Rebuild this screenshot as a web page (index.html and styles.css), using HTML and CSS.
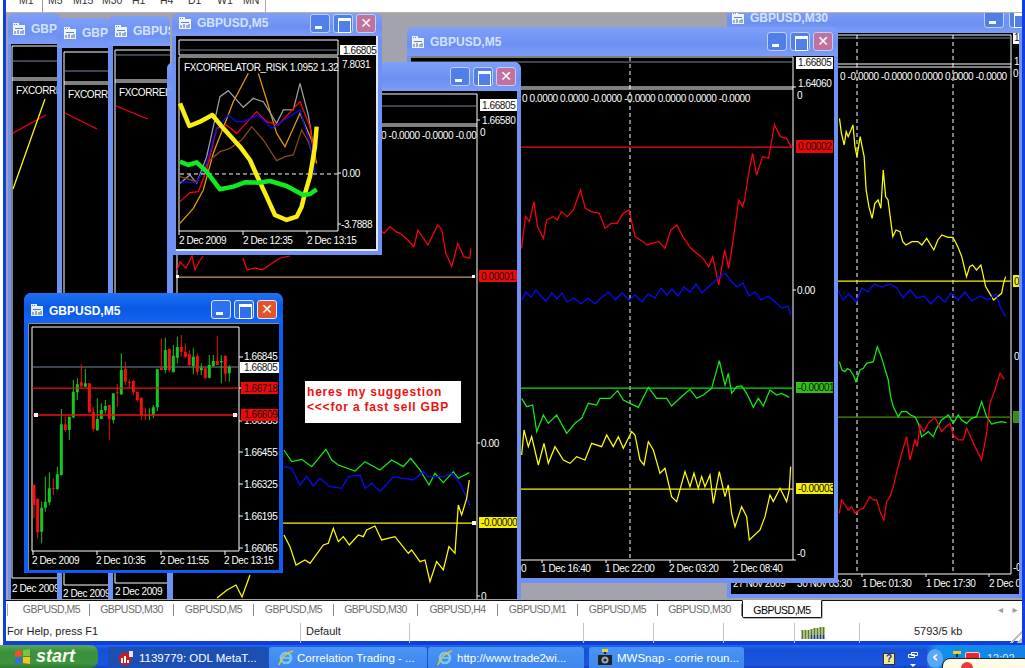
FILE: index.html
```html
<!DOCTYPE html>
<html lang="en">
<head>
  <meta charset="UTF-8">
  <title>MetaTrader - GBPUSD</title>
  <link rel="stylesheet" href="styles.css">
</head>
<body>
<svg class="defs" width="0" height="0">
  <symbol id="winicon" viewBox="0 0 14 14">
    <path fill="#fff" d="M1 1h6v2h6v10H1z"/>
    <path fill="#5a7fd0" d="M2 2h1v1H2zM4 2h1v1H4zM3 6h8v1H3z"/>
    <path fill="none" stroke="#44608f" d="M3 9v3M6 8v4M9 9v3M11 8v4"/>
  </symbol>
</svg>

<div class="app">
  <div class="frame">
    <div class="toolbar">
      <span>M1</span><i></i><span>M5</span><span>M15</span><span>M30</span><span>H1</span><span>H4</span><span>D1</span><span>W1</span><span>MN</span>
    </div>

    <div class="mdi">
      <!-- back windows -->
      <div class="win w1">
        <div class="title"><svg class="ico"><use href="#winicon"/></svg><span>GBPUSD,M5</span></div>
        <svg class="chart" viewBox="11 44 49 555">
          <path class="wline" d="M12 46H60M12 78H60M12 80H60M12 46V578M12 578H60"/>
          <path class="gline" d="M12 61H60"/>
          <text x="16" y="94">FXCORRELATOR_RISK</text>
          <path class="red" d="M13 133L46 115"/>
          <path class="yellow" d="M13 189L45 99"/>
          <text x="12" y="592">2 Dec 2009</text>
        </svg>
      </div>

      <div class="win w2">
        <div class="title"><svg class="ico"><use href="#winicon"/></svg><span>GBPUSD,M5</span></div>
        <svg class="chart" viewBox="62 48 48 551">
          <path class="wline" d="M64 52H110M64 82H110M64 84H110M64 52V585M64 585H110"/>
          <path class="gline" d="M64 71H110"/>
          <text x="68" y="98">FXCORRELATOR_RISK</text>
          <path class="red" d="M65 113L97 129"/>
          <text x="63" y="597">2 Dec 2009</text>
        </svg>
      </div>

      <div class="win w3">
        <div class="title"><svg class="ico"><use href="#winicon"/></svg><span>GBPUSD,M5</span></div>
        <svg class="chart" viewBox="113 46 57 553">
          <path class="wline" d="M115 50H170M115 80H170M115 82H170M115 50V583M115 583H170"/>
          <path class="gline" d="M115 55H170"/>
          <text x="119" y="96">FXCORRELATOR_RISK</text>
          <path class="red" d="M116 106L148 119"/>
          <text x="115" y="595">2 Dec 2009</text>
        </svg>
      </div>

      <div class="win w7">
        <div class="title"><svg class="ico"><use href="#winicon"/></svg><span>GBPUSD,M30</span><div class="btns"><b class="bmin"></b><b class="bmax"></b></div></div>
        <svg class="chart" viewBox="731 33 288 561">
          <path class="wline" d="M731 35H1011M731 64H1011M731 67H1011M1011 35V574M731 574H1011"/>
          <path class="gline" d="M731 38H1011"/>
          <path class="dash" d="M857 35V574M953 35V574"/>
          <text x="840" y="80">0 -0.0000 -0.0000 0.0000 0.0000 -0.0000</text>
          <path class="yline" d="M731 281H1011"/>
          <path class="oline" d="M731 417H1011"/>
          <g class="zoom2">
            <polyline class="yellow" points="1103,355 1108,400 1115,435 1120,395 1125,410 1137,375 1142,440 1147,470 1155,410 1160,440 1165,470 1170,570 1177,620 1185,655 1192,610 1200,600 1207,625 1213,510 1219,590 1225,600 1237,710 1245,690 1255,695 1262,725 1270,735 1285,725 1300,725 1310,735 1322,715 1340,750 1350,720 1360,705 1375,712 1388,712 1400,740 1410,770 1422,830 1430,800 1437,795 1447,810 1458,795 1470,860 1490,900 1510,880 1515,850 1520,830"/>
          </g>
          <polyline class="blue" points="838,290 843,300 849,294 856,302 862,288 868,292 874,284 882,287 890,284 897,288 903,298 910,290 917,298 924,296 931,304 938,296 945,302 951,293 958,300 965,292 972,301 980,296 988,300 996,294 1000,306 1003,312 1006,317"/>
          <g class="zoom7">
            <polyline class="green" points="958,185 966,210 975,215 982,206 990,210 1000,225 1008,245 1020,210 1030,205 1040,190 1060,185 1072,140 1082,165 1090,190 1105,240 1112,290 1120,320 1135,350 1145,335 1160,335 1172,345 1185,350 1195,370 1205,410 1225,395 1240,410 1250,385 1265,360 1285,345 1300,370 1315,345 1325,360 1340,370 1355,355 1370,350 1385,305 1400,350 1415,372 1430,368 1445,365 1460,368"/>
            <polyline class="red" points="958,640 965,600 975,615 985,630 995,620 1005,640 1018,630 1030,625 1050,590 1060,600 1070,600 1082,640 1092,660 1100,605 1110,590 1120,560 1132,510 1145,460 1160,410 1170,480 1185,420 1192,440 1200,375 1212,395 1225,370 1245,352 1265,395 1278,380 1290,370 1300,405 1315,420 1330,420 1340,385 1352,410 1365,440 1385,480 1400,400 1410,310 1425,270 1440,220 1453,238"/>
          </g>
          <rect class="lwhite" x="1013" y="32" width="6" height="12"/>
          <text class="dark" x="1014" y="41">1</text>
          <text x="1014" y="65">1</text>
          <text x="1013" y="77">0</text>
          <rect class="lyellow" x="1013" y="275" width="6" height="12"/>
          <text class="dark" x="1014" y="285">0</text>
          <rect class="lolive" x="1013" y="411" width="6" height="12"/>
          <text x="1014" y="360">0</text>
          <text x="1013" y="571">-0</text>
          <path class="wline" d="M862 574v3M926 574v3M989 574v3"/>
          <text x="733" y="587">27 Nov 2009</text>
          <text x="797" y="587">30 Nov 03:30</text>
          <text x="862" y="587">1 Dec 01:30</text>
          <text x="926" y="587">1 Dec 17:30</text>
          <text x="989" y="587">2 Dec 09:30</text>
        </svg>
      </div>

      <div class="win w6">
        <div class="title"><svg class="ico"><use href="#winicon"/></svg><span>GBPUSD,M5</span><div class="btns"><b class="bmin"></b><b class="bmax"></b><b class="bclose">✕</b></div></div>
        <svg class="chart" viewBox="411 56 423 522">
          <path class="wline" d="M411 57H793M411 87H793M411 89H793M793 57V560M521 560H793"/>
          <path class="gline" d="M411 62H793"/>
          <path class="dash" d="M630 57V560"/>
          <text x="522" y="102">0 0.0000 0.0000 -0.0000 -0.0000 0.0000 0.0000 -0.0000</text>
          <path class="rline" d="M521 147H793"/>
          <path class="gnline" d="M521 388H793"/>
          <path class="yline" d="M521 489H793"/>
          <g class="zoom2">
            <polyline class="red" points="305,745 315,650 325,665 336,605 345,680 360,715 368,660 385,650 395,660 405,635 420,650 435,630 453,570 465,625 480,635 500,640 515,685 530,670 545,670 560,640 575,630 590,710 610,725 620,735 630,730 650,725 665,745 680,690 695,675 710,710 730,745 750,765 760,775 775,800 785,770 800,855 815,750 825,805 835,730 850,600 860,620 865,600 875,520 885,460 895,525 910,470 925,475 940,375 955,410 970,415 982,440"/>
          </g>
          <polyline class="blue" points="522,300 526,292 531,297 536,290 541,296 546,301 552,293 557,299 562,293 567,302 574,298 581,304 588,298 595,304 602,297 609,292 615,300 622,293 629,300 635,295 642,302 648,294 655,298 661,288 667,295 672,289 678,296 684,287 690,292 696,284 702,293 707,288 714,282 719,277 725,273 731,281 737,287 743,283 749,296 755,292 761,300 768,296 775,302 782,308 788,306 791,315"/>
          <g class="zoom7">
            <polyline class="green" points="5,295 20,320 38,315 50,395 70,345 85,370 110,345 140,400 165,370 185,355 205,310 230,315 240,295 270,295 293,272 310,300 330,310 355,322 385,262 410,295 440,295 455,318 490,285 510,268 530,295 550,285 575,265 598,182 615,255 625,220 635,280 650,260 665,258 680,280 700,322 715,295 730,318 750,270 770,285 785,280 808,292"/>
            <polyline class="yellow" points="5,465 12,390 25,440 35,410 55,495 72,430 85,490 105,440 130,480 150,490 170,470 195,480 215,430 245,440 260,405 280,440 295,410 310,445 335,395 345,405 360,480 372,495 385,425 400,450 420,520 435,505 455,590 470,605 495,515 510,560 522,520 535,565 545,530 555,560 570,525 580,610 598,515 615,590 625,555 635,640 645,680 665,620 680,650 688,720 720,690 735,650 750,585 760,605 780,565 800,605 808,570 812,500"/>
          </g>
          <path class="wline" d="M793 87h3M793 290h3M793 560h3M542 560v3M606 560v3M670 560v3M734 560v3"/>
          <rect class="lwhite" x="796" y="57" width="37" height="12"/>
          <text class="dark" x="798" y="66">1.66805</text>
          <text x="798" y="87">1.64060</text>
          <text x="797" y="99">0</text>
          <rect class="lred" x="796" y="140" width="37" height="13"/>
          <text class="dark" x="798" y="150">0.00002</text>
          <text x="797" y="294">0.00</text>
          <rect class="lgreen" x="796" y="382" width="37" height="11"/>
          <text class="dark" x="798" y="391">-0.00001</text>
          <rect class="lyellow" x="796" y="483" width="37" height="11"/>
          <text class="dark" x="798" y="492">-0.00003</text>
          <text x="797" y="557">-0</text>
          <text x="521" y="572">0</text>
          <text x="541" y="572">1 Dec 16:40</text>
          <text x="605" y="572">1 Dec 22:00</text>
          <text x="669" y="572">2 Dec 03:20</text>
          <text x="733" y="572">2 Dec 08:40</text>
        </svg>
      </div>

      <div class="win w5">
        <div class="title"><svg class="ico"><use href="#winicon"/></svg><span>GBPUSD,M5</span><div class="btns"><b class="bmin"></b><b class="bmax"></b><b class="bclose">✕</b></div></div>
        <svg class="chart" viewBox="173 91 344 508">
          <path class="wline" d="M173 94H477M173 124H477M173 126H477M477 94V599M177 255V294"/>
          <path class="gline" d="M173 106H477"/>
          <text x="381" y="139">0 -0.0000 -0.0000 -0.00</text>
          <path class="tline" d="M177 277H473"/>
          <rect class="handle" x="176" y="275" width="3" height="3"/>
          <rect class="handle" x="472" y="275" width="3" height="3"/>
          <path class="yline" d="M283 523H473"/>
          <rect class="handle yh" x="472" y="521" width="4" height="4"/>
          <polyline class="red" points="177,270 180,262 186,268 192,256 195,270 199,262 203,256"/>
          <polyline class="red" points="243,258 247,270 255,268 262,270 271,264 280,258 290,256"/>
          <g class="zoom2">
            <polyline class="red" points="-50,690 -40,700 -25,680 -10,695 0,700 15,715 35,740 45,690 70,735 95,675 105,690 115,760 130,800 145,730 160,770 175,775 178,745"/>
          </g>
          <g class="zoom6">
            <polyline class="green" points="12,570 35,605 65,598 95,620 138,568 155,600 175,615 225,633 255,605 300,630 335,600 370,620 392,595 420,630 447,675 465,640 490,668 520,635 535,655 568,638"/>
            <polyline class="blue" points="12,620 35,625 60,675 80,650 100,678 120,655 150,680 185,685 205,650 240,645 255,685 275,670 300,695 340,650 400,660 430,635 445,650 490,650 515,640 540,670 570,735"/>
            <polyline class="yellow" points="12,825 30,860 48,915 75,900 90,910 130,855 145,850 160,805 175,845 190,830 208,855 235,825 250,830 260,810 285,798 305,840 345,830 385,880 395,870 420,905 435,900 450,965 470,905 490,930 507,860 525,880 535,735 545,765 560,715 568,660"/>
          </g>
          <polyline class="yellow" points="217,598 227,590 236,585 242,597 250,575"/>
          <rect class="lwhite" x="480" y="99" width="37" height="12"/>
          <text class="dark" x="482" y="109">1.66805</text>
          <text x="482" y="124">1.66580</text>
          <text x="480" y="136">0</text>
          <path class="wline" d="M477 120h3M477 443h3M477 596h3"/>
          <rect class="lred" x="479" y="270" width="38" height="12"/>
          <text class="dark" x="481" y="280">0.00001</text>
          <text x="481" y="447">0.00</text>
          <rect class="lyellow" x="479" y="517" width="38" height="11"/>
          <text class="dark" x="481" y="526">-0.00000</text>
          <text x="481" y="600">0</text>

          <rect class="notice" x="305" y="381" width="156" height="42"/>
          <text class="noticetxt" x="307" y="396">heres my suggestion</text>
          <text class="noticetxt" x="307" y="411">&lt;&lt;&lt;for a fast sell GBP</text>
        </svg>
      </div>

      <div class="win w4">
        <div class="title"><svg class="ico"><use href="#winicon"/></svg><span>GBPUSD,M5</span><div class="btns"><b class="bmin"></b><b class="bmax"></b><b class="bclose">✕</b></div></div>
        <svg class="chart" viewBox="176 36 202 215">
          <path class="wline" d="M179 40H338V55H179ZM179 57H338V231H179Z"/>
          <path class="gline" d="M179 50H338"/>
          <path class="edge" d="M377 36V250H176"/>
          <text x="184" y="71">FXCORRELATOR_RISK 1.0952 1.32</text>
          <g class="zoom1">
            <polyline class="orange" points="540,670 580,625 610,570 640,460 700,305 745,220"/>
            <polyline class="orange" points="775,220 800,300 830,400 855,440 900,340 935,420 950,490"/>
            <polyline class="grey" points="540,550 570,525 590,550 620,470 660,290 685,272 730,322 760,295 790,305 830,370 850,330 880,330 900,250 925,345 945,470"/>
            <polyline class="brown" points="540,530 590,545 630,480 660,455 690,445 725,420 755,380 790,420 830,482 855,470 880,465 905,390 925,425 945,490"/>
            <polyline class="red" points="540,605 570,578 595,575 620,510 650,385 680,375 710,400 770,335 800,365 835,375 900,305 930,380 945,480"/>
            <polyline class="blue" points="540,545 590,548 620,490 650,385 685,345 710,365 730,365 775,345 815,385 900,330 930,430 945,520"/>
            <path class="dash" d="M540 522H1013"/>
            <polyline class="thick tyellow" points="540,310 568,378 600,365 637,345 670,385 720,440 750,480 770,525 800,590 825,645 860,660 890,650 905,620 915,580 930,530 945,440 950,380"/>
            <polyline class="thick tgreen" points="540,485 565,495 590,487 620,515 660,568 700,560 735,547 775,548 810,543 860,558 910,585 930,582 950,568"/>
          </g>
          <path class="wline" d="M179 231v4M243 231v4M307 231v3M338 173h3M338 224h3"/>
          <rect class="lwhite" x="340" y="45" width="36" height="10"/>
          <text class="dark" x="343" y="54">1.66805</text>
          <text x="342" y="68">7.8031</text>
          <text x="342" y="177">0.00</text>
          <text x="341" y="228">-3.7888</text>
          <text x="179" y="244">2 Dec 2009</text>
          <text x="243" y="244">2 Dec 12:35</text>
          <text x="307" y="244">2 Dec 13:15</text>
        </svg>
      </div>

      <!-- active window -->
      <div class="win w8">
        <div class="title"><svg class="ico"><use href="#winicon"/></svg><span>GBPUSD,M5</span><div class="btns"><b class="bmin"></b><b class="bmax"></b><b class="bclose">✕</b></div></div>
        <svg class="chart" viewBox="28 323 251 247">
          <path class="inner" d="M28.5 570V323.5H279"/>
          <path class="wline" d="M32 327H239V551H32Z"/>
          <path class="gline" d="M32 367H239"/>
          <g class="candles">
            <path class="wr" d="M102 598V700M113 640V760M160 580V630M196 395V440M244 238V310M268 295V385M280 365V440M328 360V465M352 297V365M376 230V300M388 283V310M400 285V330M412 320V350M424 338V405M436 370V405M484 160V255M508 190V262M544 150V215M556 175V220M568 195V245M592 205V270M616 245V280M652 153V240M676 210V290"/>
            <path class="br" d="M102 600V660M113 642V742M160 610V613M196 418V435M244 292V304M268 295V382M280 380V432M328 360V402M352 322V325M376 252V290M388 290V293M400 288V322M412 320V345M424 338V390M436 390V392M484 248V255M508 192V256M544 186V200M556 200V215M568 208V240M592 213V260M616 250V280M652 228V240M676 213V266"/>
            <path class="wg" d="M125 650V775M136 575V680M148 562V660M172 545V615M184 372V572M208 395V465M220 285V400M232 280V345M256 252V305M292 340V438M304 355V402M316 345V385M340 325V415M364 205V330M448 370V405M460 360V400M472 252V378M496 158V265M520 180V262M532 155V235M580 190V268M604 235V270M628 210V280M640 210V245M664 210V295M688 240V290"/>
            <path class="bg" d="M125 668V740M136 650V668M148 610V652M172 568V612M184 418V570M208 395V435M220 320V397M232 298V322M256 295V305M292 402V436M304 375V402M316 363V376M340 325V405M364 255V328M448 390V392M460 367V390M472 253V367M496 195V255M520 212V262M532 186V218M580 215V243M604 248V256M628 240V278M640 228V243M664 228V232M688 246V265"/>
          </g>
          <path class="rline" d="M32 388H239"/>
          <path class="rline thick2" d="M32 415H239"/>
          <rect class="handle" x="34" y="413" width="4" height="4"/>
          <rect class="handle" x="233" y="413" width="4" height="4"/>
          <path class="wline" d="M239 357h4M239 388h3M239 421h3M239 452h4M239 484h4M239 516h4M239 548h4M33 551v4M97 551v4M161 551v4M225 551v4"/>
          <text x="244" y="360">1.66845</text>
          <rect class="lwhite" x="240" y="362" width="39" height="11"/>
          <text class="dark" x="244" y="371">1.66805</text>
          <rect class="lred" x="241" y="382" width="37" height="12"/>
          <text class="dark" x="244" y="392">1.66718</text>
          <text x="244" y="424">1.66585</text>
          <rect class="lred" x="241" y="409" width="37" height="12"/>
          <text class="dark" x="244" y="418">1.66609</text>
          <text x="244" y="456">1.66455</text>
          <text x="244" y="488">1.66325</text>
          <text x="244" y="520">1.66195</text>
          <text x="244" y="552">1.66065</text>
          <text x="32" y="564">2 Dec 2009</text>
          <text x="96" y="564">2 Dec 10:35</text>
          <text x="160" y="564">2 Dec 11:55</text>
          <text x="224" y="564">2 Dec 13:15</text>
        </svg>
      </div>
    </div>

    <div class="tabs">
      <div class="tab first">GBPUSD,M5</div>
      <div class="tab m30">GBPUSD,M30</div>
      <div class="tab">GBPUSD,M5</div>
      <div class="tab">GBPUSD,M5</div>
      <div class="tab m30">GBPUSD,M30</div>
      <div class="tab">GBPUSD,H4</div>
      <div class="tab">GBPUSD,M1</div>
      <div class="tab">GBPUSD,M5</div>
      <div class="tab m30">GBPUSD,M30</div>
      <div class="tab active">GBPUSD,M5</div>
      <div class="arrows"><span>◂</span><span>▸</span></div>
    </div>

    <div class="status">
      <div>For Help, press F1</div>
      <div class="sdef">Default</div>
      <div></div>
      <div></div>
      <div></div>
      <div></div>
      <div class="conn">
        <svg width="24" height="13" viewBox="0 0 24 13">
          <path stroke="#5b7d18" stroke-width="2" d="M1.5 4V13M4.5 4V13M7.5 4V13M10.5 3V9M13.5 2V9M16.5 2V9M19.5 1V9M22.5 1V9"/>
          <path stroke="#1c3f8c" stroke-width="2" d="M10.5 9V13M13.5 9V13M16.5 9V13M19.5 9V13M22.5 9V13"/>
        </svg>
      </div>
      <div class="skb">5793/5 kb</div>
    </div>
  </div>

  <div class="taskbar">
    <div class="start">
      <svg class="flag" width="17" height="16" viewBox="0 0 17 16">
        <path fill="#e8532b" d="M1 2l7-1v6l-7 1z"/>
        <path fill="#7dc242" d="M9 1l7-1v7l-7 0z"/>
        <path fill="#2f6fe0" d="M1 9l7-1v6l-7 1z"/>
        <path fill="#f4c31c" d="M9 8h7v7l-7-1z"/>
      </svg>
      <span>start</span>
    </div>
    <div class="task on">
      <svg width="16" height="16" viewBox="0 0 16 16"><circle cx="7" cy="9" r="6.5" fill="#c81e1e"/><path fill="#fff" d="M3 8h2v5H3zM6 6h2v7H6zM9 10h2v3H9z"/><path fill="#e8e8e8" d="M11 1h4v6h-4z"/></svg>
      <span>1139779: ODL MetaT...</span>
    </div>
    <div class="task t2">
      <svg width="16" height="16" viewBox="0 0 16 16"><circle cx="8" cy="8" r="5" fill="none" stroke="#7ec8f5" stroke-width="2.6"/><path fill="none" stroke="#f0c020" stroke-width="1.5" d="M1 15C3 8 9 2 15 1"/><path stroke="#7ec8f5" stroke-width="1.6" d="M4 8h8"/></svg>
      <span>Correlation Trading - ...</span>
    </div>
    <div class="task t3">
      <svg width="16" height="16" viewBox="0 0 16 16"><circle cx="8" cy="8" r="5" fill="none" stroke="#7ec8f5" stroke-width="2.6"/><path fill="none" stroke="#f0c020" stroke-width="1.5" d="M1 15C3 8 9 2 15 1"/><path stroke="#7ec8f5" stroke-width="1.6" d="M4 8h8"/></svg>
      <span>http://www.trade2wi...</span>
    </div>
    <div class="task t4">
      <svg width="16" height="17" viewBox="0 0 16 17"><path fill="#f2d21c" d="M5 0h6v3H5z"/><path fill="#222" d="M7 3h2v2H7zM1 6h14v10H1z"/><circle cx="8" cy="11" r="3.5" fill="#9aa8c0"/><circle cx="8" cy="11" r="1.6" fill="#223"/></svg>
      <span>MWSnap - corrie roun...</span>
    </div>
    <div class="tray">
      <div class="helpq">?</div>
      <svg class="restore" width="10" height="16" viewBox="0 0 10 16"><path fill="none" stroke="#fff" d="M3.5 .5h6v3h-6zM.5 2.5h6v3h-6z"/><path fill="#fff" d="M2 12h6l-3 3z"/></svg>
      <div class="clockarea">
        <div class="showmore">‹</div>
        <svg class="cam" width="10" height="6" viewBox="0 0 10 6"><path fill="#f2d21c" d="M1 0h8v3H1z"/><path fill="#222" d="M4 3h2v3H4z"/></svg>
        <div class="redico"></div>
        <div class="clock">12:02</div>
        <div class="balloon"><i></i></div>
      </div>
    </div>
  </div>
</div>
</body>
</html>
```

FILE: styles.css
```css
* {
  box-sizing: border-box;
}
html, body {
  margin: 0;
  height: 100%;
  overflow: hidden;
  background: #fff;
}
body {
  font-family: "Liberation Sans", Arial, sans-serif;
}
.defs {
  position: absolute;
}

.app {
  width: 1025px;
  height: 668px;
  display: flex;
  flex-direction: column;
}
.frame {
  height: 645px;
  margin-left: 3px;
  border-left: 3px solid #0f3fe0;
  border-right: 3px solid #0f3fe0;
  border-bottom: 4px solid #0f3fe0;
  display: flex;
  flex-direction: column;
}

/* timeframe bar, only the bottom of it is on screen */
.toolbar {
  height: 13px;
  flex: none;
  display: grid;
  grid-template-columns: 23px 6px 25px 29px 30px 28px 28px 29px 26px 23px;
  justify-content: start;
  padding-left: 13px;
  background: #fff;
  border-bottom: 1px solid #b8b4a4;
  overflow: hidden;
  font-size: 10.5px;
  line-height: 0;
  color: #333;
}
.toolbar span {
  height: 12px;
}
.toolbar i {
  width: 1px;
  height: 12px;
  background: #999;
}
.toolbar span:last-child {
  border-right: 1px solid #aaa;
}

.mdi {
  position: relative;
  height: 587px;
  flex: none;
  overflow: hidden;
  background: #a3a3ae;
}

/* child windows */
.win {
  position: absolute;
  display: flex;
  flex-direction: column;
  padding: 0 4px 4px;
  border-radius: 7px 7px 0 0;
  background: #6f92f2;
  overflow: hidden;
}
.title {
  flex: none;
  display: flex;
  align-items: center;
  gap: 5px;
  padding-left: 4px;
  background: linear-gradient(#7fa0f8, #6c90f2 60%, #7c9cf6);
  margin: 0 -4px;
  color: #d4e2ff;
  font-size: 12px;
  font-weight: bold;
  white-space: nowrap;
}
.ico {
  width: 14px;
  height: 14px;
  flex: none;
  opacity: .9;
}
.btns {
  margin-left: auto;
  display: flex;
  gap: 3px;
  padding-right: 5px;
}
.btns b {
  position: relative;
  width: 20px;
  height: 19px;
  border: 1px solid #bcd0fa;
  border-radius: 3px;
  background: #4f80ea;
  color: #fff;
  font: bold 14px/17px "DejaVu Sans", sans-serif;
  text-align: center;
}
.btns .bclose {
  background: #c2709c;
}
.bmin::after {
  content: "";
  position: absolute;
  left: 4px;
  bottom: 3px;
  width: 7px;
  height: 3px;
  background: #fff;
}
.bmax::after {
  content: "";
  position: absolute;
  left: 4px;
  top: 3px;
  width: 11px;
  height: 11px;
  border: 1px solid #fff;
  border-top-width: 3px;
}
.chart {
  display: block;
  flex: 1;
  min-height: 0;
  width: 100%;
  background: #000;
}
.chart text {
  font-size: 10px;
  letter-spacing: -.4px;
  fill: #fff;
}
.chart text.dark {
  fill: #111;
}
.chart text.noticetxt {
  font-size: 12px;
  font-weight: bold;
  letter-spacing: .8px;
  fill: #f01010;
}

/* window places on the desktop */
.w1 { left: 2px; top: 0; width: 52px; height: 586px; padding: 0 0 0 3px; }
.w1 .title { height: 31px; margin: 0 0 0 -3px; padding-left: 4px; }
.w2 { left: 51px; top: 5px; width: 53px; height: 581px; padding: 0 0 0 5px; }
.w2 .title { height: 30px; margin: 0 0 0 -5px; padding-left: 6px; }
.w3 { left: 102px; top: 3px; width: 62px; height: 583px; padding: 0 0 0 5px; }
.w3 .title { height: 30px; margin: 0 0 0 -5px; padding-left: 6px; }
.w4 { left: 166px; top: 0; width: 210px; height: 242px; }
.w4 .title { height: 23px; padding-left: 6px; padding-bottom: 3px; }
.w4 .btns { padding-right: 6px; }
.w5 { left: 161px; top: 49px; width: 354px; height: 537px; padding: 0 4px 0 6px; }
.w5 .title { height: 29px; margin: 0 -4px 0 -6px; }
.w6 { left: 401px; top: 14px; width: 431px; height: 556px; padding-bottom: 5px; }
.w6 .title { height: 29px; padding-left: 4px; }
.w7 { left: 721px; top: -5px; width: 295px; height: 590px; padding: 0 3px 4px 4px; }
.w7 .title { height: 25px; margin: 0 -3px 0 -4px; padding-bottom: 5px; padding-left: 4px; }
.w7 .btns { gap: 5px; padding-right: 0; margin-right: -7px; }

.w8 {
  left: 18px;
  top: 280px;
  width: 259px;
  height: 280px;
  padding-bottom: 3px;
  background: #0f5cf0;
}
.w8 .title {
  height: 30px;
  padding-left: 6px;
  padding-top: 3px;
  color: #fff;
  background: linear-gradient(#1f72f2, #0a58e6 50%, #1466ee);
}
.w8 .title span {
  margin-top: 3px;
}
.w8 .btns {
  padding-right: 6px;
}
.w8 .btns b {
  background: #2f6ff0;
  border-color: #e0e8ff;
}
.w8 .btns .bclose {
  background: #e2532c;
}

/* chart drawing */
.chart polyline, .chart path {
  fill: none;
  stroke-width: 1.25;
  vector-effect: non-scaling-stroke;
}
.chart .wline, .chart .gline, .chart .dash, .chart .inner {
  stroke-width: 1;
}
.chart rect {
  stroke: none;
}
.zoom1 { transform: scale(.3333); }
.zoom2 { transform: translate(400px, 0) scale(.3984, .3333); }
.zoom6 { transform: translate(280px, 260px) scale(.3333); }
.zoom7 { transform: translate(520px, 300px) scale(.3333); }
.candles { transform: translate(0, 285px) scale(.3333); }

.chart .wline { stroke: #fff; }
.chart .gline { stroke: #778899; }
.chart .inner { stroke: #8c8c94; }
.chart .edge { stroke: #dfe6f5; stroke-width: 2; }
.chart .dash { stroke: #fff; stroke-dasharray: 4 3; }
.chart .red { stroke: #ff0010; }
.chart .blue { stroke: #0a0aff; }
.chart .green { stroke: #10ee10; }
.chart .yellow { stroke: #ffff00; }
.chart .orange { stroke: #e8a000; }
.chart .grey { stroke: #a0a0a0; }
.chart .brown { stroke: #8a4a12; }
.chart .rline { stroke: #f01010; }
.chart .tline { stroke: #c09a70; }
.chart .gnline { stroke: #10e010; }
.chart .oline { stroke: #4e8c10; }
.chart .yline { stroke: #fcf410; }
.chart .thick { stroke-width: 4.5px; stroke-linejoin: round; }
.chart .thick2 { stroke-width: 1.5px; }
.chart .tyellow { stroke: #f8ee10; }
.chart .tgreen { stroke: #10ea20; }
.chart .wr { stroke: #f01010; stroke-width: 1px; }
.chart .wg { stroke: #10c820; stroke-width: 1px; }
.chart .br { stroke: #f01010; stroke-width: 3px; }
.chart .bg { stroke: #10c820; stroke-width: 3px; }

.handle { fill: #fff; }
.lwhite { fill: #fff; }
.lred { fill: #f00808; }
.lgreen { fill: #30c010; }
.lolive { fill: #3c8c10; }
.lyellow { fill: #f4f000; }
.notice { fill: #fff; }

/* tabs along the bottom */
.tabs {
  height: 23px;
  flex: none;
  display: flex;
  align-items: flex-start;
  background: #fff;
  border-top: 1px solid #111;
  padding-left: 1px;
  font-size: 10.5px;
  letter-spacing: -.5px;
  color: #6b6b6b;
  white-space: nowrap;
}
.tab {
  width: 80px;
  height: 12px;
  margin-top: 3px;
  line-height: 11px;
  text-align: center;
  border-right: 1px solid #8a8a8a;
}
.tab.m30 {
  width: 84px;
}
.tab.first {
  width: 83px;
  padding-left: 6px;
  border-left: 1px solid #aaa;
}
.tab.active {
  height: 18px;
  margin: -1px 0 0 0;
  padding-top: 3px;
  line-height: 12px;
  color: #000;
  background: #fff;
  border: 1px solid #111;
  border-top-color: #fff;
  border-radius: 0 0 2px 2px;
  box-shadow: 1px 1px 0 #bbb;
}
.arrows {
  margin-left: auto;
  display: flex;
  gap: 10px;
  padding: 3px 5px 0 0;
  color: #9a9aa0;
  font: 10px/12px "DejaVu Sans", sans-serif;
}

.status {
  height: 18px;
  flex: none;
  display: grid;
  grid-template-columns: 295px 109px 174px 70px 70px 71px 65px 1fr;
  background: #fff;
  font-size: 11px;
  line-height: 16px;
  color: #222;
}
.status > div {
  padding-left: 1px;
  border-right: 1px solid #c4c4bc;
  white-space: nowrap;
}
.status .sdef {
  padding-left: 5px;
}
.status .conn {
  padding: 3px 0 0 6px;
}
.status .skb {
  border: 0;
  padding-left: 54px;
  background: linear-gradient(135deg, transparent 93%, #c0c0b8 93%, #c0c0b8 95%, transparent 95%, transparent 97%, #c0c0b8 97%);
}

/* windows taskbar */
.taskbar {
  height: 23px;
  flex: none;
  display: flex;
  background: linear-gradient(#1e6ae8, #1750d8 20%, #1a55dc 85%, #1440c0);
  color: #fff;
  font-size: 11px;
  overflow: hidden;
}
.start {
  width: 98px;
  flex: none;
  display: flex;
  align-items: center;
  gap: 5px;
  padding-left: 14px;
  background: linear-gradient(#5aa85a, #3a8f3c 30%, #3e943e 80%, #2d7a30);
  border-radius: 0 8px 8px 0;
  font: italic bold 18px "Liberation Sans", sans-serif;
  color: #f4f8f0;
}
.task {
  width: 160px;
  flex: none;
  display: flex;
  align-items: center;
  gap: 5px;
  padding-left: 10px;
  margin-top: 2px;
  border-radius: 3px 3px 0 0;
  background: linear-gradient(#4a94f4, #3c86ee);
  font-size: 11.5px;
  white-space: nowrap;
}
.task.on {
  margin-left: 10px;
  background: #1c4fb4;
}
.task.t2 {
  margin-left: 1px;
  width: 158px;
  padding-left: 9px;
  gap: 3px;
}
.task.t3 {
  margin-left: 1px;
  width: 156px;
  padding-left: 9px;
  gap: 4px;
}
.task.t4 {
  margin-left: 5px;
  width: 155px;
  padding-left: 8px;
  gap: 4px;
}
.tray {
  flex: 1;
  display: flex;
  align-items: flex-start;
  position: relative;
}
.helpq {
  margin: 8px 0 0 139px;
  width: 12px;
  height: 12px;
  background: #f4e88c;
  border: 1px solid #333;
  color: #1428a0;
  font: bold 10px/10px "Liberation Sans", sans-serif;
  text-align: center;
}
.restore {
  margin: 7px 0 0 13px;
}
.clockarea {
  position: relative;
  margin-left: 9px;
  flex: 1;
  height: 23px;
  background: linear-gradient(90deg, #1a60dc, #1090ea 10%, #1480e4);
}
.showmore {
  position: absolute;
  left: 0;
  top: 4px;
  width: 16px;
  height: 19px;
  border-radius: 50%;
  background: #5aa8f4;
  font: bold 15px/17px "DejaVu Sans", sans-serif;
  text-align: center;
}
.cam {
  position: absolute;
  left: 25px;
  top: 6px;
}
.redico {
  position: absolute;
  left: 38px;
  top: 7px;
  width: 15px;
  height: 9px;
  border-radius: 2px;
  background: #e8242c;
  border: 1px solid #f8d0d0;
}
.clock {
  position: absolute;
  left: 60px;
  top: 7px;
  font-size: 11px;
  color: #dcecff;
}
.balloon {
  position: absolute;
  left: 15px;
  top: 13px;
  width: 90px;
  height: 20px;
  background: #fffde8;
  border: 1px solid #222;
  border-radius: 8px;
}
.balloon i {
  position: absolute;
  left: 18px;
  top: 3px;
  width: 12px;
  height: 12px;
  border-radius: 50%;
  background: #e04040;
}
```
